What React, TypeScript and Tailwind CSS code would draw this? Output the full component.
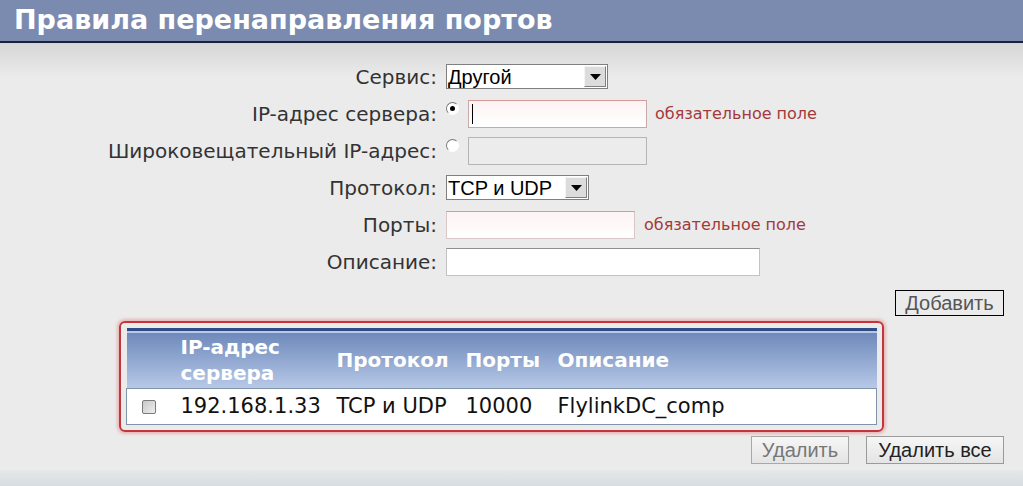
import React from 'react';

const labelFont = { fontFamily: '"DejaVu Sans", Verdana, sans-serif' };
const arial = { fontFamily: '"Liberation Sans", Arial, sans-serif' };

const Radio: React.FC<{ checked?: boolean }> = ({ checked }) => (
  <span className="relative mt-[-10px] inline-block h-[13px] w-[13px] shrink-0 rounded-full border border-b-white border-l-[#7a7a7a] border-r-white border-t-[#7a7a7a] bg-white">
    {checked && (
      <span className="absolute left-[3px] top-[3px] h-[5px] w-[5px] rounded-full bg-black" />
    )}
  </span>
);

const Select: React.FC<{ value: string; width: string }> = ({ value, width }) => (
  <div className={`flex h-[25px] items-center border border-[#7f7f7f] bg-white ${width}`} style={arial}>
    <span className="flex-1 pl-[1px] text-[20px] leading-none text-black">{value}</span>
    <span className="mr-[1px] flex h-[21px] w-[22px] items-center justify-center border border-b-[#808080] border-l-[#f4f4f4] border-r-[#808080] border-t-[#f4f4f4] bg-[#dcdcdc]">
      <svg width="11" height="6" viewBox="0 0 11 6">
        <path d="M0 0h11L5.5 6z" fill="#000" />
      </svg>
    </span>
  </div>
);

const Required = () => (
  <span className="text-[16px] text-[#a23a3a]" style={labelFont}>
    обязательное поле
  </span>
);

const Row: React.FC<{ label: string; children: React.ReactNode }> = ({ label, children }) => (
  <div className="flex h-[37px] items-center">
    <div className="w-[437px] text-right text-[20px] text-[#333]" style={labelFont}>
      {label}
    </div>
    <div className="ml-[9px] flex items-center">{children}</div>
  </div>
);

const App: React.FC = () => {
  return (
    <div className="flex h-[486px] w-[1023px] flex-col overflow-hidden bg-[#ebebeb]">
      <div className="h-[41px] shrink-0 bg-[#7b8bb0] pl-[14px] pt-[4px]">
        <h1 className="text-[27px] font-bold leading-[32px] text-white" style={labelFont}>
          Правила перенаправления портов
        </h1>
      </div>
      <div className="h-[2px] shrink-0 bg-[#18223c]" />
      <div className="flex-1 bg-gradient-to-b from-[#d6d6d6] via-[#ebebeb] via-[8%] to-[#ebebeb] pt-[15px]">
        <Row label="Сервис:">
          <Select value="Другой" width="w-[162px]" />
        </Row>
        <Row label="IP-адрес сервера:">
          <Radio checked />
          <div className="ml-[9px] flex h-[28px] w-[179px] items-center border border-[#c9a8a8] border-t-[#d49a9a] bg-gradient-to-b from-[#fdf3f3] to-white pl-[3px]">
            <span className="h-[20px] w-px bg-black" />
          </div>
          <span className="ml-[8px]">
            <Required />
          </span>
        </Row>
        <Row label="Широковещательный IP-адрес:">
          <Radio />
          <div className="ml-[9px] h-[28px] w-[179px] border border-[#b5b5b5] bg-[#ececec]" />
        </Row>
        <Row label="Протокол:">
          <Select value="TCP и UDP" width="w-[143px]" />
        </Row>
        <Row label="Порты:">
          <div className="h-[28px] w-[189px] border border-[#d9c6c6] border-t-[#d49a9a] bg-gradient-to-b from-[#fdf3f3] to-white" />
          <span className="ml-[9px]">
            <Required />
          </span>
        </Row>
        <Row label="Описание:">
          <div className="h-[28px] w-[314px] border border-[#c3c3c3] border-t-[#8f8f8f] bg-white" />
        </Row>

        <div className="mt-[10px] flex justify-end pr-[19px]">
          <button
            className="h-[26px] w-[109px] border border-black bg-[#ebebeb] text-[20px] leading-none text-[#555]"
            style={arial}
          >
            Добавить
          </button>
        </div>

        <div className="ml-[119px] mt-[5px] w-[765px] rounded-[6px] border-2 border-[#c0363c] p-[5px] shadow-[0_0_3px_2px_rgba(230,150,150,0.6)]">
          <table className="w-full border-collapse text-left" style={labelFont}>
            <thead>
              <tr className="border-t-[3px] border-[#2f4c86] bg-gradient-to-b from-[#6e89bb] to-[#b9cae8] text-[20px] font-bold leading-[26px] text-white">
                <th className="h-[59px] w-[54px]" />
                <th className="w-[156px] align-middle font-bold">
                  IP-адрес
                  <br />
                  сервера
                </th>
                <th className="w-[129px] font-bold">Протокол</th>
                <th className="w-[92px] font-bold">Порты</th>
                <th className="font-bold">Описание</th>
              </tr>
            </thead>
            <tbody>
              <tr className="border border-[#7f94a8] bg-white text-[21px] text-[#111]">
                <td className="h-[36px] pl-[15px]">
                  <span className="block h-[14px] w-[14px] rounded-[2px] border border-[#7a7a7a] bg-gradient-to-br from-[#c8c8c8] to-[#eeeeee]" />
                </td>
                <td>192.168.1.33</td>
                <td>TCP и UDP</td>
                <td>10000</td>
                <td>FlylinkDC_comp</td>
              </tr>
            </tbody>
          </table>
        </div>

        <div className="mt-[4px] flex justify-end gap-[17px] pr-[19px]" style={arial}>
          <button className="h-[28px] w-[98px] border border-[#a8a8a8] bg-gradient-to-b from-[#f6f6f6] to-[#e4e4e4] text-[20px] leading-none text-[#777]">
            Удалить
          </button>
          <button className="h-[28px] w-[138px] border border-[#9a9a9a] bg-gradient-to-b from-[#f6f6f6] to-[#e4e4e4] text-[20px] leading-none text-[#222]">
            Удалить все
          </button>
        </div>
      </div>
      <div className="h-[16px] shrink-0 bg-gradient-to-b from-[#e6e8e9] to-[#d6dde0]" />
    </div>
  );
};

export default App;
